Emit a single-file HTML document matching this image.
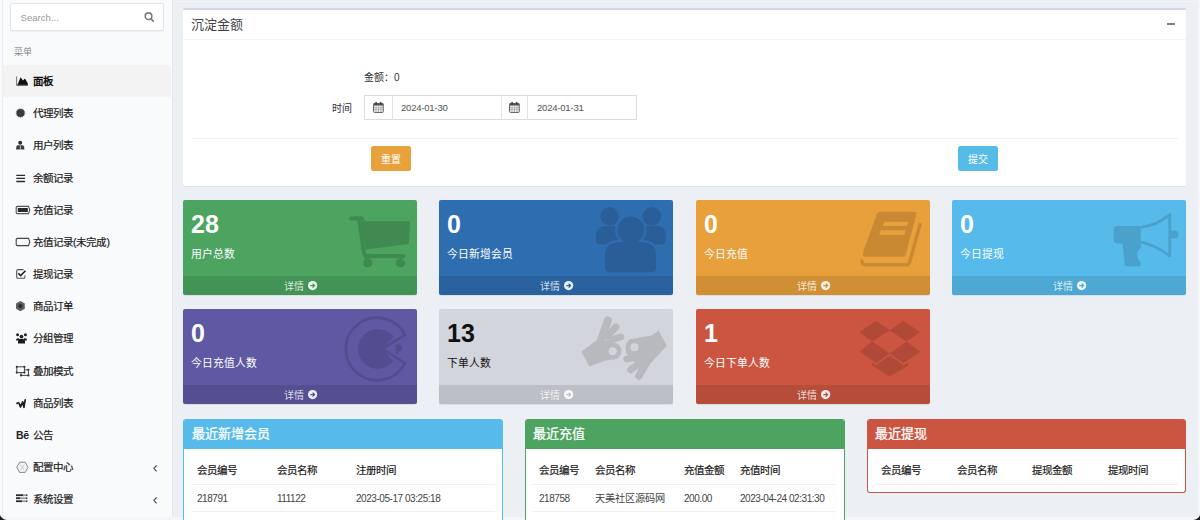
<!DOCTYPE html>
<html lang="zh-CN">
<head>
<meta charset="utf-8">
<style>
*{box-sizing:border-box;margin:0;padding:0}
html,body{width:1200px;height:520px;overflow:hidden;background:#1a1a1a}
body{position:relative;font-family:"Liberation Sans",sans-serif;color:#333}
.a{position:absolute}
#frame{left:0;top:0;width:1200px;height:520px;background:#f5f6f9;border-radius:0 0 7px 7px;overflow:hidden}
#main{left:172px;top:0;width:1026px;height:517px;background:#ecf0f5}
#sb{left:0;top:0;width:172.8px;height:517px;background:#f9fafc;border-right:1.5px solid #e3e6eb}
#sbline{left:2px;top:0;width:1px;height:517px;background:#eceef1}
#search{left:10px;top:3px;width:154px;height:27.5px;background:#fff;border:1px solid #e1e4e9;border-radius:2px;box-shadow:0 1px 1px rgba(0,0,0,.04)}
.mi{left:3px;width:168px;height:32px;font-size:10.5px;color:#1a1a1a;font-weight:500;white-space:nowrap}
.mi.act{background:#f3f3f4;color:#111;font-weight:bold}
.mi.act .tx{-webkit-text-stroke:0}
.mi svg{position:absolute;left:0;top:0}
.mi .tx{position:absolute;left:30px;top:8px;line-height:16px;-webkit-text-stroke:.2px #1a1a1a}
.box{background:#fff;border-top:2px solid #d2d6de;border-radius:2px;box-shadow:0 1px 1px rgba(0,0,0,.06)}
.ib{height:95px;border-radius:2px;color:#fff;overflow:hidden;box-shadow:0 1px 1px rgba(0,0,0,.08)}
.ib .num{position:absolute;left:8px;top:10px;font-size:25px;font-weight:bold;line-height:28px}
.ib .lbl{position:absolute;left:8px;top:45.2px;font-size:10.8px;line-height:18px}
.ib .ft{position:absolute;left:0;top:76px;width:100%;height:19px;background:rgba(0,0,0,.1);font-size:10px;line-height:19px;color:rgba(255,255,255,.82)}
.ib .ft span{position:absolute;top:.5px}
.ib svg.big{position:absolute}
.tb{background:#fff;border-radius:3px;overflow:hidden}
.tb .hd{position:absolute;left:0;top:0;width:100%;height:30px;color:#fff;font-size:13px;line-height:30px;font-weight:500;-webkit-text-stroke:.25px #fff}
.th{position:absolute;font-size:10.5px;font-weight:500;color:#1a1a1a;-webkit-text-stroke:.2px #1a1a1a;line-height:14px;white-space:nowrap}
.td{position:absolute;font-size:10px;letter-spacing:-.45px;color:#444;line-height:12px;white-space:nowrap}
.tdz{position:absolute;font-size:10.2px;color:#444;line-height:14px;white-space:nowrap}
.rl{position:absolute;height:1px;background:#f0f0f0}
</style>
</head>
<body>
<div id="frame" class="a">
<div id="main" class="a"></div>
<div class="a" style="left:172px;top:1px;width:1025px;height:1px;background:#f2f4f9"></div>
<div id="sb" class="a"></div>
<div id="sbline" class="a"></div>
<div class="a" style="left:1198px;top:0;width:2px;height:520px;background:#f4f5f8"></div>

<!-- search -->
<div id="search" class="a">
  <div class="a" style="left:9.5px;top:8px;font-size:9.6px;line-height:12px;color:#9a9a9a">Search...</div>
  <svg class="a" style="left:132px;top:7px" width="12" height="12" viewBox="0 0 12 12"><circle cx="5.5" cy="5.2" r="3.3" fill="none" stroke="#7d7d7d" stroke-width="1.6"/><line x1="8" y1="7.8" x2="10.3" y2="10.1" stroke="#7d7d7d" stroke-width="1.7" stroke-linecap="round"/></svg>
</div>
<div class="a" style="left:14px;top:45.5px;font-size:9px;line-height:12px;color:#8a8a8a">菜单</div>

<!-- menu -->
<div class="mi a act" style="top:65px">
  <svg width="30" height="32" viewBox="0 0 30 32"><path d="M13.6 11.5V20.4" stroke="#666" stroke-width=".9"/><path d="M14.2 20.6L17.6 12.2L20 15.5L22 13.5L24.8 18.6V20.6Z" fill="#111"/><path d="M13.2 20.1H24.8" stroke="#555" stroke-width=".8"/></svg>
  <span class="tx">面板</span></div>
<div class="mi a" style="top:97.18px">
  <svg width="30" height="32" viewBox="0 0 30 32"><circle cx="17.5" cy="16" r="4.1" fill="#3a3a3a"/><circle cx="17.5" cy="16" r="4.3" fill="none" stroke="#3a3a3a" stroke-width=".6" stroke-dasharray="1 1"/></svg>
  <span class="tx">代理列表</span></div>
<div class="mi a" style="top:129.36px">
  <svg width="30" height="32" viewBox="0 0 30 32"><circle cx="17.2" cy="13.8" r="2" fill="#2e2e2e"/><path d="M13 20.5 L13.6 17.2 Q14 16.3 15.2 16.3 L19.4 16.3 Q20.5 16.3 20.9 17.2 L21.5 20.5 Z" fill="#3a3a3a"/><rect x="16.9" y="16.5" width=".7" height="4" fill="#f9fafc"/></svg>
  <span class="tx">用户列表</span></div>
<div class="mi a" style="top:161.54px">
  <svg width="30" height="32" viewBox="0 0 30 32"><path d="M13.3 13.4h8.8M13.3 16.4h8.8M13.3 19.5h8.8" stroke="#2a2a2a" stroke-width="1.3"/></svg>
  <span class="tx">余额记录</span></div>
<div class="mi a" style="top:193.72px">
  <svg width="30" height="32" viewBox="0 0 30 32"><path d="M14.2 12.4h11.3l1.3 3.6-1.3 3.6H14.2q-1 0-1-1v-5.2q0-1 1-1z" fill="none" stroke="#555" stroke-width="1.1"/><rect x="14.8" y="14" width="10" height="4" fill="#2a2a2a"/></svg>
  <span class="tx">充值记录</span></div>
<div class="mi a" style="top:225.9px">
  <svg width="30" height="32" viewBox="0 0 30 32"><path d="M14.2 12.4h11.3l1.3 3.6-1.3 3.6H14.2q-1 0-1-1v-5.2q0-1 1-1z" fill="none" stroke="#444" stroke-width="1.1"/></svg>
  <span class="tx">充值记录(未完成)</span></div>
<div class="mi a" style="top:258.08px">
  <svg width="30" height="32" viewBox="0 0 30 32"><path d="M20.6 11.6h-5.6q-1.3 0-1.3 1.3v6q0 1.3 1.3 1.3h5.6q1.3 0 1.3-1.3v-1.5" fill="none" stroke="#555" stroke-width="1.1"/><path d="M15.2 15.2l2.4 2.4 4.9-4.9" fill="none" stroke="#1e1e1e" stroke-width="1.5"/></svg>
  <span class="tx">提现记录</span></div>
<div class="mi a" style="top:290.26px">
  <svg width="30" height="32" viewBox="0 0 30 32"><path d="M17.4 11l4.4 2.5v5.2l-4.4 2.5-4.4-2.5v-5.2z" fill="#606060"/><circle cx="17.4" cy="16.1" r="2.2" fill="#2e2e2e"/></svg>
  <span class="tx">商品订单</span></div>
<div class="mi a" style="top:322.44px">
  <svg width="30" height="32" viewBox="0 0 30 32"><circle cx="14.6" cy="12.8" r="1.5" fill="#222"/><circle cx="22.4" cy="12.8" r="1.5" fill="#222"/><circle cx="18.5" cy="14.6" r="1.9" fill="#222"/><path d="M13 18.4q0-2.2 1.8-2.2h1.4v2.2z" fill="#222"/><path d="M24 18.4q0-2.2-1.8-2.2h-1.4v2.2z" fill="#222"/><path d="M15 21.6v-2.6q0-2 2-2h3q2 0 2 2v2.6z" fill="#1a1a1a"/></svg>
  <span class="tx">分组管理</span></div>
<div class="mi a" style="top:354.62px">
  <svg width="30" height="32" viewBox="0 0 30 32"><rect x="13.8" y="11.8" width="7.6" height="5.8" fill="none" stroke="#444" stroke-width="1"/><path d="M21.4 14.8h4v5.6h-7.4v-2.8" fill="none" stroke="#444" stroke-width="1"/><g fill="#333"><circle cx="13.8" cy="11.8" r="1.1"/><circle cx="21.4" cy="11.8" r="1.1"/><circle cx="13.8" cy="17.6" r="1.1"/><circle cx="21.4" cy="17.6" r="1.1"/><circle cx="25.4" cy="14.8" r="1.1"/><circle cx="25.4" cy="20.4" r="1.1"/><circle cx="18" cy="20.4" r="1.1"/></g></svg>
  <span class="tx">叠加模式</span></div>
<div class="mi a" style="top:386.8px">
  <svg width="30" height="32" viewBox="0 0 30 32"><path d="M14 16.3q1.3-1.2 2.2 0.3l1.3 3.3 2.2-5 1.2 5.5q0.6-3.5 1.3-7.5" fill="none" stroke="#1e1e1e" stroke-width="1.7" stroke-linejoin="round" stroke-linecap="round"/></svg>
  <span class="tx">商品列表</span></div>
<div class="mi a" style="top:418.98px">
  <span class="a" style="left:13px;top:10px;font-size:10.5px;line-height:12px;font-weight:bold;color:#222;letter-spacing:-.3px">Bē</span>
  <span class="tx">公告</span></div>
<div class="mi a" style="top:451.16px">
  <svg width="30" height="32" viewBox="0 0 30 32"><path d="M16.6 11.2h5.6l2.8 5.1-2.8 5.1h-5.6l-2.8-5.1z" fill="#f4f4f5" stroke="#888" stroke-width="1"/><path d="M17.5 13.5l3.8 5.6M21.3 13.5l-3.8 5.6" stroke="#c4c4c4" stroke-width=".8"/></svg>
  <span class="tx">配置中心</span>
  <svg style="left:148px;top:12.8px" width="8" height="9" viewBox="0 0 8 9"><path d="M5.6 1.3L2.9 4.3l2.7 3" fill="none" stroke="#555" stroke-width="1.25"/></svg></div>
<div class="mi a" style="top:483.34px">
  <svg width="30" height="32" viewBox="0 0 30 32"><g fill="#2a2a2a"><rect x="13" y="11.3" width="7.5" height="1.8"/><rect x="13" y="14.3" width="4.5" height="1.8"/><rect x="13" y="17.3" width="6" height="1.8"/></g><g fill="#9a9a9a"><rect x="20.5" y="11.3" width="2.4" height="1.8"/><rect x="17.5" y="14.3" width="5.4" height="1.8"/><rect x="19" y="17.3" width="3.9" height="1.8"/></g><g fill="#444"><rect x="23" y="11.3" width="1.4" height="1.8"/><rect x="23" y="14.3" width="1.4" height="1.8"/><rect x="23" y="17.3" width="1.4" height="1.8"/></g></svg>
  <span class="tx">系统设置</span>
  <svg style="left:148px;top:12.8px" width="8" height="9" viewBox="0 0 8 9"><path d="M5.6 1.3L2.9 4.3l2.7 3" fill="none" stroke="#555" stroke-width="1.25"/></svg></div>

<!-- main form box -->
<div class="box a" style="left:183px;top:8px;width:1003px;height:178px"></div>
<div class="a" style="left:191px;top:15.5px;font-size:13px;line-height:18px;color:#444">沉淀金额</div>
<div class="a" style="left:1167px;top:23px;width:7.5px;height:2px;background:#7b8090"></div>
<div class="a" style="left:183px;top:39px;width:1003px;height:1px;background:#f4f4f4"></div>
<div class="a" style="left:364px;top:71px;font-size:10px;line-height:14px;color:#333">金额：0</div>
<div class="a" style="left:332px;top:101.5px;font-size:10px;line-height:14px;color:#333">时间</div>
<div class="a" style="left:364px;top:95px;width:273px;height:25px;border:1px solid #d9dde3;background:#fff"></div>
<div class="a" style="left:392px;top:95px;width:1px;height:25px;background:#e0e3e8"></div>
<div class="a" style="left:501px;top:95px;width:1px;height:25px;background:#e0e3e8"></div>
<div class="a" style="left:527px;top:95px;width:1px;height:25px;background:#e0e3e8"></div>
<svg class="a" style="left:373px;top:101px" width="11" height="12" viewBox="0 0 11 12"><rect x=".6" y="2.4" width="9.6" height="9" rx=".8" fill="none" stroke="#555" stroke-width="1"/><rect x=".6" y="2.4" width="9.6" height="2.2" fill="#555"/><path d="M1 6.7h9M1 8.7h9M3 4.6v6.6M5.4 4.6v6.6M7.8 4.6v6.6" stroke="#888" stroke-width=".6"/><rect x="2.4" y=".8" width="1.4" height="2.6" rx=".6" fill="#444"/><rect x="7" y=".8" width="1.4" height="2.6" rx=".6" fill="#444"/></svg>
<svg class="a" style="left:509px;top:101px" width="11" height="12" viewBox="0 0 11 12"><rect x=".6" y="2.4" width="9.6" height="9" rx=".8" fill="none" stroke="#555" stroke-width="1"/><rect x=".6" y="2.4" width="9.6" height="2.2" fill="#555"/><path d="M1 6.7h9M1 8.7h9M3 4.6v6.6M5.4 4.6v6.6M7.8 4.6v6.6" stroke="#888" stroke-width=".6"/><rect x="2.4" y=".8" width="1.4" height="2.6" rx=".6" fill="#444"/><rect x="7" y=".8" width="1.4" height="2.6" rx=".6" fill="#444"/></svg>
<div class="a" style="left:401px;top:102px;font-size:9.6px;letter-spacing:-.25px;line-height:12px;color:#555">2024-01-30</div>
<div class="a" style="left:537px;top:102px;font-size:9.6px;letter-spacing:-.25px;line-height:12px;color:#555">2024-01-31</div>
<div class="a" style="left:191px;top:138px;width:987px;height:1px;background:#f1f1f1"></div>
<div class="a" style="left:371px;top:146px;width:40px;height:25px;background:#e8a23c;border-radius:2.5px;color:#fff;font-size:10px;text-align:center;line-height:27px">重置</div>
<div class="a" style="left:958px;top:146px;width:40px;height:25px;background:#57bbe8;border-radius:2.5px;color:#fff;font-size:10px;text-align:center;line-height:27px">提交</div>

<!-- info boxes row 1 -->
<div class="ib a" style="left:183px;top:200px;width:234px;background:#4ca460">
  <svg class="big" style="left:0;top:0" width="234" height="76" viewBox="0 0 234 76"><g fill="#3e8a50"><path d="M168.2 16.4h9.5q3 0 3.6 2.7l0.4 2.1"/><rect x="166" y="16.4" width="14.5" height="4.1" rx="2"/><path d="M177.6 21.2h47.5q2 0 1.8 2l-0.9 19q-0.1 1.8-1.9 2l-41.5 5.2z"/><path d="M178 19.5l4.4 30 1.5 6h-4.1l-1.4-6-4.2-29.8z"/><rect x="180.3" y="54" width="42" height="4.2" rx="2"/><circle cx="184.7" cy="62.9" r="4.6"/><circle cx="217.5" cy="62.9" r="4.6"/></g></svg>
  <div class="num">28</div><div class="lbl">用户总数</div>
  <div class="ft"><span style="left:101px">详情</span><svg class="a" style="left:125px;top:4.8px" width="10" height="10" viewBox="0 0 10 10"><circle cx="4.6" cy="4.6" r="4.6" fill="rgba(255,255,255,.9)"/><path d="M2.3 4.6h4.2M4.6 2.6l2 2-2 2" fill="none" stroke="#43925a" stroke-width="1.3"/></svg></div>
</div>
<div class="ib a" style="left:439px;top:200px;width:234px;background:#2e6eb0">
  <svg class="big" style="left:0;top:0" width="234" height="76" viewBox="0 0 234 76"><g fill="#2a5e98"><circle cx="170.6" cy="16.2" r="9.2"/><circle cx="212.9" cy="16.2" r="9.2"/><path d="M156.8 36q0-10 10-10h14v18.6h-19q-5 0-5-5z"/><path d="M226.8 36q0-10-10-10h-14v18.6h19q5 0 5-5z"/></g><g fill="#2e6eb0"><circle cx="191.8" cy="30" r="15.8"/><path d="M164 68v-12q0-16 16-16h23q16 0 16 16v12z"/></g><g fill="#2a5e98"><circle cx="191.8" cy="30" r="13.5"/><path d="M166 67.3v-11.3q0-14 14-14h23q14 0 14 14v11.3q0 5-5 5h-41q-5 0-5-5z"/></g></svg>
  <div class="num">0</div><div class="lbl">今日新增会员</div>
  <div class="ft"><span style="left:101px">详情</span><svg class="a" style="left:125px;top:4.8px" width="10" height="10" viewBox="0 0 10 10"><circle cx="4.6" cy="4.6" r="4.6" fill="rgba(255,255,255,.9)"/><path d="M2.3 4.6h4.2M4.6 2.6l2 2-2 2" fill="none" stroke="#2a63a0" stroke-width="1.3"/></svg></div>
</div>
<div class="ib a" style="left:696px;top:200px;width:234px;background:#e8a03c">
  <svg class="big" style="left:-1px;top:0" width="234" height="76" viewBox="0 0 234 76"><path d="M225 24.5L214.6 62.4Q213.9 64.8 211.3 64.8H170.8Q166.8 64.8 167 61" fill="none" stroke="#c98933" stroke-width="3.4" stroke-linecap="round" stroke-linejoin="round"/><path d="M185 11.7H219.2Q222 11.7 221.3 14.4L210.8 54.3Q210.1 56.8 207.5 56.8H170.5Q167.3 56.8 168 53.8L169.5 48Q171 44 172.5 40L181.8 14.3Q182.5 11.7 185 11.7Z" fill="#c98933"/><path d="M189 21.8H213.2L212.2 25.9H188Z M185.5 30.3H210.5L209.4 34.9H184.3Z" fill="#e8a03c"/></svg>
  <div class="num">0</div><div class="lbl">今日充值</div>
  <div class="ft"><span style="left:101px">详情</span><svg class="a" style="left:125px;top:4.8px" width="10" height="10" viewBox="0 0 10 10"><circle cx="4.6" cy="4.6" r="4.6" fill="rgba(255,255,255,.9)"/><path d="M2.3 4.6h4.2M4.6 2.6l2 2-2 2" fill="none" stroke="#cf8d35" stroke-width="1.3"/></svg></div>
</div>
<div class="ib a" style="left:952px;top:200px;width:234px;background:#56bbeb">
  <svg class="big" style="left:-1px;top:0" width="234" height="76" viewBox="0 0 234 76"><g fill="#4aa1cc"><path d="M166 25.9h23.7v17.5h-23.7q-3.3 0-3.3-3.3v-10.9q0-3.3 3.3-3.3z"/><path d="M171.5 43h18.2v5.5q-4.5 2.5-3.2 8.5q0.8 3.3 3.2 5.2v4h-15.5q-1.6-10-2.7-23.2z"/><rect x="219" y="30.6" width="8.4" height="8" rx="3.5"/></g><path d="M189.7 27.3Q205.5 25.5 218.8 14.6V56.1Q205.5 45.5 189.7 42" fill="none" stroke="#4aa1cc" stroke-width="2.8" stroke-linejoin="round"/></svg>
  <div class="num">0</div><div class="lbl">今日提现</div>
  <div class="ft"><span style="left:101px">详情</span><svg class="a" style="left:125px;top:4.8px" width="10" height="10" viewBox="0 0 10 10"><circle cx="4.6" cy="4.6" r="4.6" fill="rgba(255,255,255,.9)"/><path d="M2.3 4.6h4.2M4.6 2.6l2 2-2 2" fill="none" stroke="#4ea8d6" stroke-width="1.3"/></svg></div>
</div>

<!-- info boxes row 2 -->
<div class="ib a" style="left:183px;top:309px;width:234px;background:#5e59a2">
  <svg class="big" style="left:0;top:0" width="234" height="76" viewBox="0 0 234 76"><path d="M222 25.8A31.3 31.3 0 1 0 222 54.2L199.6 40Z" fill="none" stroke="#524d8f" stroke-width="2.6" stroke-linejoin="miter"/><path d="M210.4 27.7A19.8 19.8 0 1 0 210.4 52.2L199.6 40Z" fill="#524d8f"/><path d="M212.6 35.6h3q3.8 0 3.8 3.5t-3.8 3.5h-0.6v2.4h-2.4z" fill="#524d8f"/></svg>
  <div class="num">0</div><div class="lbl">今日充值人数</div>
  <div class="ft"><span style="left:101px">详情</span><svg class="a" style="left:125px;top:4.8px" width="10" height="10" viewBox="0 0 10 10"><circle cx="4.6" cy="4.6" r="4.6" fill="rgba(255,255,255,.9)"/><path d="M2.3 4.6h4.2M4.6 2.6l2 2-2 2" fill="none" stroke="#554f95" stroke-width="1.3"/></svg></div>
</div>
<div class="ib a" style="left:439px;top:309px;width:234px;background:#d2d5dc;color:#111">
  <svg class="big" style="left:0;top:0" width="234" height="76" viewBox="0 0 234 76"><g transform="translate(139 3) scale(0.1346)"><g fill="#b8b9bd"><path d="M25 295L150 200L265 225L300 345L200 362L85 405Z"/><circle cx="262" cy="290" r="62"/><path d="M380 205L545 175L600 140L660 250L525 395L430 385L355 300Z"/><circle cx="415" cy="262" r="63"/></g><g stroke="#b8b9bd" stroke-linecap="round" fill="none"><path d="M172 205L222 62" stroke-width="58"/><path d="M215 180L282 112" stroke-width="52"/><path d="M240 210L318 185" stroke-width="50"/><path d="M455 330L362 350" stroke-width="50"/><path d="M480 365L392 428" stroke-width="52"/><path d="M510 375L452 475" stroke-width="56"/></g><g fill="#d2d5dc"><circle cx="258" cy="292" r="30"/><circle cx="420" cy="262" r="30"/></g></g></svg>
  <div class="num">13</div><div class="lbl">下单人数</div>
  <div class="ft" style="color:rgba(255,255,255,.8)"><span style="left:101px">详情</span><svg class="a" style="left:125px;top:4.8px" width="10" height="10" viewBox="0 0 10 10"><circle cx="4.6" cy="4.6" r="4.6" fill="rgba(255,255,255,.9)"/><path d="M2.3 4.6h4.2M4.6 2.6l2 2-2 2" fill="none" stroke="#bdc0c6" stroke-width="1.3"/></svg></div>
</div>
<div class="ib a" style="left:696px;top:309px;width:234px;background:#cb5541">
  <svg class="big" style="left:-1px;top:0" width="234" height="76" viewBox="0 0 234 76"><g fill="#b04938"><path d="M164.4 23.2l16.8-11.5 13.5 9.5-17.5 11.3z"/><path d="M194.7 21.2l13.8-9.5 16.5 11.5-13.5 9.3z"/><path d="M177.2 32.5l-12.8 10.2 16.8 11.3 13.5-9.5z"/><path d="M211.5 32.5l13.5 10.2-16.5 11.3-13.8-9.5z"/><path d="M177.2 53.5v3.3l17.5 10.8 18.2-10.8v-3.3l-4.4 2.7-13.8-9.6-13.5 9.6z"/></g></svg>
  <div class="num">1</div><div class="lbl">今日下单人数</div>
  <div class="ft"><span style="left:101px">详情</span><svg class="a" style="left:125px;top:4.8px" width="10" height="10" viewBox="0 0 10 10"><circle cx="4.6" cy="4.6" r="4.6" fill="rgba(255,255,255,.9)"/><path d="M2.3 4.6h4.2M4.6 2.6l2 2-2 2" fill="none" stroke="#b84c3b" stroke-width="1.3"/></svg></div>
</div>

<!-- table boxes -->
<div class="tb a" style="left:183px;top:419px;width:320px;height:110px;border:1px solid #56bbeb;border-top:0"><div class="hd" style="background:#56bbeb;padding-left:8px">最近新增会员</div></div>
<div class="th" style="left:197px;top:463px">会员编号</div>
<div class="th" style="left:277px;top:463px">会员名称</div>
<div class="th" style="left:356px;top:463px">注册时间</div>
<div class="rl" style="left:191px;top:484px;width:304px"></div>
<div class="td" style="left:197px;top:492.5px">218791</div>
<div class="td" style="left:277px;top:492.5px">111122</div>
<div class="td" style="left:356px;top:492.5px">2023-05-17 03:25:18</div>
<div class="rl" style="left:191px;top:511px;width:304px"></div>

<div class="tb a" style="left:525px;top:419px;width:320px;height:110px;border:1px solid #4ca460;border-top:0"><div class="hd" style="background:#4ca460;padding-left:7px">最近充值</div></div>
<div class="th" style="left:539px;top:463px">会员编号</div>
<div class="th" style="left:595px;top:463px">会员名称</div>
<div class="th" style="left:684px;top:463px">充值金额</div>
<div class="th" style="left:740px;top:463px">充值时间</div>
<div class="rl" style="left:533px;top:484px;width:303px"></div>
<div class="td" style="left:539px;top:492.5px">218758</div>
<div class="tdz" style="left:595px;top:491.5px">天美社区源码网</div>
<div class="td" style="left:684px;top:492.5px">200.00</div>
<div class="td" style="left:740px;top:492.5px">2023-04-24 02:31:30</div>
<div class="rl" style="left:533px;top:511px;width:303px"></div>

<div class="tb a" style="left:867px;top:419px;width:319px;height:74px;border:1px solid #cb5541;border-top:0"><div class="hd" style="background:#cb5541;padding-left:7px">最近提现</div></div>
<div class="th" style="left:881px;top:463px">会员编号</div>
<div class="th" style="left:957px;top:463px">会员名称</div>
<div class="th" style="left:1032px;top:463px">提现金额</div>
<div class="th" style="left:1108px;top:463px">提现时间</div>
<div class="rl" style="left:875px;top:484px;width:303px"></div>

</div>
</body>
</html>
